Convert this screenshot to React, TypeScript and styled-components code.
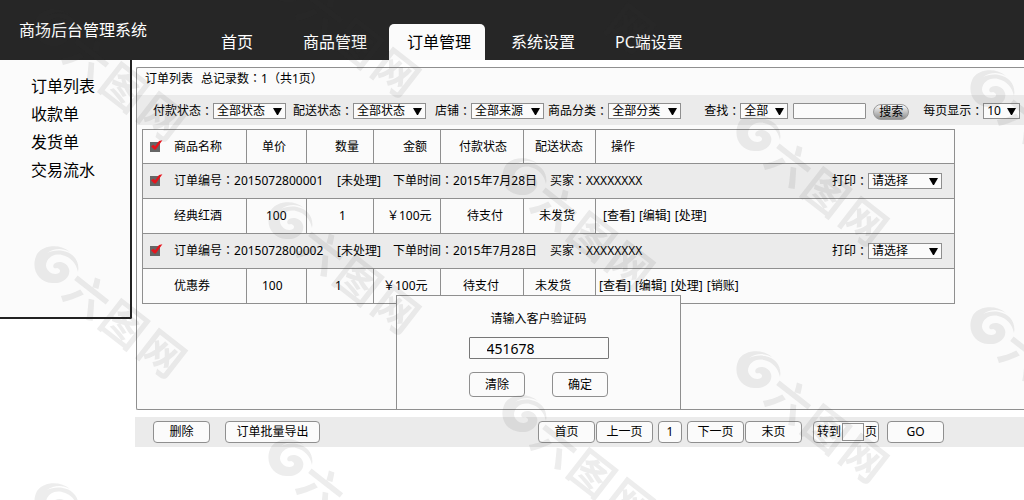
import React from 'react';
import styled, { createGlobalStyle } from 'styled-components';

const line = '#8f8f8f';
const paper = '#fbfbfb';
const band = '#ebebeb';
const dark = '#262626';

const GlobalStyle = createGlobalStyle`
  *, *::before, *::after { box-sizing: border-box; }
  body {
    margin: 0;
    background: #fff;
    color: #000;
    font-family: "Noto Sans", "Noto Sans CJK SC", sans-serif;
    font-size: 12px;
    line-height: 16px;
  }
  button, input, select { font: inherit; color: inherit; margin: 0; }
  a { color: inherit; text-decoration: none; }
`;

/* Full-width punctuation that sits in the middle of its cell. */
const Mark = styled.span`
  font-family: "Noto Sans CJK TC", sans-serif;
  line-height: 1;
`;

/* ---------- header ---------- */

const Header = styled.header`
  display: flex;
  height: 60px;
  background: ${dark};
  color: #fff;
  font-size: 16px;
`;

const SystemName = styled.h1`
  width: 203px;
  margin: 0;
  padding: 18px 0 0 19px;
  font-size: 16px;
  font-weight: 400;
  line-height: 24px;
  white-space: nowrap;
`;

const Nav = styled.nav`
  display: flex;
  align-items: flex-end;
  gap: 8px;
`;

const Tab = styled.a<{ $active?: boolean }>`
  min-width: 74px;
  height: 36px;
  padding: 0 14px 0 18px;
  border-radius: 5px 5px 0 0;
  background: ${(p) => (p.$active ? paper : 'transparent')};
  color: ${(p) => (p.$active ? '#000' : '#fff')};
  line-height: 36px;
  white-space: nowrap;
`;

/* ---------- body ---------- */

const Body = styled.div`
  display: flex;
  align-items: flex-start;
`;

const Sidebar = styled.aside`
  flex: none;
  width: 132px;
  min-height: 259px;
  padding: 12px 0 0 31px;
  border: solid #222;
  border-width: 0 2px 2px 0;
  border-radius: 0 0 2px 0;
  background: ${paper};
`;

const SideLink = styled.a`
  display: block;
  font-size: 16px;
  line-height: 28px;
`;

const Main = styled.main`
  flex: 1;
  min-width: 0;
  padding: 7px 0 0 3px;
`;

const Panel = styled.section`
  position: relative;
  min-height: 343px;
  margin-left: 1px;
  border: solid ${line};
  border-width: 1px 0 1px 1px;
  border-radius: 2px 0 0 2px;
  background: ${paper};
`;

const PanelTitle = styled.h2`
  display: flex;
  gap: 8px;
  margin: 0;
  padding: 0 8px;
  font-size: 12px;
  font-weight: 400;
  line-height: 22px;
  height: 27px;
`;

const Filters = styled.form`
  display: flex;
  align-items: center;
  height: 30px;
  padding: 2px 0 0 16px;
  background: ${band};
  white-space: nowrap;
`;

const Field = styled.label<{ $before?: number }>`
  display: flex;
  align-items: center;
  margin-left: ${(p) => p.$before ?? 0}px;
`;

const SelectBox = styled.span<{ $width: number }>`
  position: relative;
  display: block;
  width: ${(p) => p.$width}px;
  height: 16px;

  select {
    display: block;
    appearance: none;
    width: 100%;
    height: 16px;
    padding: 0 0 0 3px;
    border: 1px solid ${line};
    border-radius: 0;
    background: ${paper};
    line-height: 14px;
  }

  svg {
    position: absolute;
    top: 5px;
    right: 4px;
    pointer-events: none;
  }
`;

const TextBox = styled.input<{ $width: number }>`
  width: ${(p) => p.$width}px;
  height: 16px;
  padding: 0 4px;
  border: 1px solid ${line};
  border-radius: 1px;
  background: ${paper};
`;

const SearchButton = styled.button`
  width: 36px;
  height: 16px;
  margin: 2px 0 0 7px;
  padding: 0;
  border: 1px solid #999;
  border-radius: 8px;
  background: linear-gradient(#fafafa, #c4c4c4 50%, #8f8f8f);
  line-height: 14px;
`;

/* ---------- orders ---------- */

const TableWrap = styled.div`
  padding: 4px 69px 0 5px;
`;

const Table = styled.table`
  width: 100%;
  border-collapse: collapse;
  table-layout: fixed;
  border: 1px solid ${line};
`;

const Row = styled.tr<{ $group?: boolean; $head?: boolean }>`
  height: ${(p) => (p.$head ? 34 : 35)}px;
  background: ${(p) => (p.$group ? band : paper)};
`;

const HeadCell = styled.th<{ $pad: number }>`
  padding: 0 0 0 ${(p) => p.$pad}px;
  border: 1px solid ${line};
  font-weight: 400;
  text-align: left;
  white-space: nowrap;
`;

const Cell = styled.td<{ $pad: number }>`
  padding: 0 0 0 ${(p) => p.$pad}px;
  border: 1px solid ${line};
  white-space: nowrap;
`;

const OrderLine = styled.div`
  display: grid;
  grid-template-columns: 24px 163px 56px 157px 1fr auto;
  align-items: center;
  padding-right: 12px;
`;

const Inline = styled.div`
  display: flex;
  align-items: center;
`;

const Actions = styled.div`
  display: flex;
  gap: 4px;
`;

const Tick = styled.label`
  position: relative;
  display: block;
  width: 24px;
  height: 12px;

  input {
    display: block;
    appearance: none;
    width: 10px;
    height: 10px;
    margin-top: 1px;
    background: #666;
  }

  svg {
    position: absolute;
    top: -1px;
    left: 0;
    display: none;
    pointer-events: none;
  }

  input:checked + svg { display: block; }
`;

/* ---------- code dialog ---------- */

const Dialog = styled.form`
  position: absolute;
  bottom: -1px;
  left: 259px;
  display: flex;
  flex-direction: column;
  align-items: center;
  width: 285px;
  height: 115px;
  padding-top: 14px;
  border: 1px solid ${line};
  background: ${paper};

  label { line-height: 18px; }
`;

const CodeInput = styled.input`
  width: 140px;
  height: 22px;
  margin: 9px 0 13px;
  padding: 0 17px;
  border: 1px solid #777;
  border-radius: 1px;
  background: ${paper};
  font-size: 14px;
`;

const DialogButtons = styled.div`
  display: flex;
  gap: 27px;
`;

const Button = styled.button<{ $width: number; $tall?: boolean }>`
  width: ${(p) => p.$width}px;
  height: ${(p) => (p.$tall ? 25 : 22)}px;
  padding: 0;
  border: 1px solid ${line};
  border-radius: 4px;
  background: ${paper};
  white-space: nowrap;
`;

/* ---------- footer ---------- */

const Footer = styled.footer`
  display: flex;
  align-items: center;
  justify-content: space-between;
  height: 30px;
  margin-top: 7px;
  padding: 0 80px 0 18px;
  background: ${band};
`;

const ButtonGroup = styled.div<{ $gap: number }>`
  display: flex;
  gap: ${(p) => p.$gap}px;
`;

const JumpTo = styled.label`
  display: flex;
  align-items: center;
  width: 66px;
  height: 22px;
  margin: 0 3px 0 6px;
  padding-left: 3px;
  border: 1px solid ${line};
  border-radius: 4px;
  background: ${paper};
  white-space: nowrap;

  input {
    width: 22px;
    height: 18px;
    margin: 0 1px;
    padding: 0 2px;
    border: 1px solid ${line};
    background: ${paper};
  }
`;

const Watermark = styled.svg`
  position: fixed;
  inset: 0;
  width: 100%;
  height: 100%;
  pointer-events: none;
`;

const Colon = () => <Mark>：</Mark>;

const Select = ({ value, width }: { value: string; width: number }) => (
  <SelectBox $width={width}>
    <select>
      <option>{value}</option>
    </select>
    <svg width="9" height="7" viewBox="0 0 9 7" aria-hidden="true">
      <path d="M0 0H9L5 7H4Z" />
    </svg>
  </SelectBox>
);

const CheckBox = ({ label }: { label: string }) => (
  <Tick>
    <input type="checkbox" defaultChecked aria-label={label} />
    <svg width="13" height="12" viewBox="0 0 13 12" aria-hidden="true">
      <path d="M1 6.2L3.6 4.8L5 6.6L9 1L12.4 0.2L5.8 9.6H4.2Z" fill="#e8141c" />
    </svg>
  </Tick>
);

const columns = [
  { name: '商品名称', width: 104, head: 7, body: 31 },
  { name: '单价', width: 60, head: 15, body: 19 },
  { name: '数量', width: 67, head: 28, body: 32 },
  { name: '金额', width: 67, head: 29, body: 13 },
  { name: '付款状态', width: 83, head: 18, body: 26 },
  { name: '配送状态', width: 72, head: 11, body: 15 },
  { name: '操作', width: 0, head: 15, body: 7 },
];

const orders = [
  {
    id: '2015072800001',
    shift: 0,
    cells: ['经典红酒', '100', '1', '￥100元', '待支付', '未发货'],
    actions: ['[查看]', '[编辑]', '[处理]'],
  },
  {
    id: '2015072800002',
    shift: 4,
    cells: ['优惠券', '100', '1', '￥100元', '待支付', '未发货'],
    actions: ['[查看]', '[编辑]', '[处理]', '[销账]'],
  },
];

/* Diagonal lattice of marks; each one is a swirl followed by three characters. */
const marks = [0, 1, 2, 3, 4].flatMap((i) =>
  [-1, 0, 1].map((k) => ({ x: 20 + 234 * i, y: 235 - 44 * i + 237 * k })),
);

const glyphs = [
  { char: '六', x: 67, y: 61, size: 44 },
  { char: '图', x: 104, y: 90, size: 44 },
  { char: '网', x: 142, y: 119, size: 44 },
];

export default function App() {
  return (
    <>
      <GlobalStyle />
      <Header>
        <SystemName>商场后台管理系统</SystemName>
        <Nav>
          <Tab href="#home">首页</Tab>
          <Tab href="#goods">商品管理</Tab>
          <Tab href="#orders" $active>订单管理</Tab>
          <Tab href="#system">系统设置</Tab>
          <Tab href="#pc">PC端设置</Tab>
        </Nav>
      </Header>
      <Body>
        <Sidebar>
          <SideLink href="#list">订单列表</SideLink>
          <SideLink href="#receipts">收款单</SideLink>
          <SideLink href="#shipping">发货单</SideLink>
          <SideLink href="#flow">交易流水</SideLink>
        </Sidebar>
        <Main>
          <Panel>
            <PanelTitle>
              <span>订单列表</span>
              <span>总记录数<Colon />1<Mark>（</Mark>共1页<Mark>）</Mark></span>
            </PanelTitle>
            <Filters onSubmit={(e) => e.preventDefault()}>
              <Field>付款状态<Colon /><Select value="全部状态" width={73} /></Field>
              <Field $before={7}>配送状态<Colon /><Select value="全部状态" width={73} /></Field>
              <Field $before={9}>店铺<Colon /><Select value="全部来源" width={73} /></Field>
              <Field $before={4}>商品分类<Colon /><Select value="全部分类" width={73} /></Field>
              <Field $before={23}>查找<Colon /><Select value="全部" width={48} /></Field>
              <Field $before={5}><TextBox $width={73} aria-label="查找内容" /></Field>
              <SearchButton>搜索</SearchButton>
              <Field $before={14}>每页显示<Colon /><Select value="10" width={37} /></Field>
            </Filters>
            <TableWrap>
              <Table>
                <colgroup>
                  {columns.map((c) => (
                    <col key={c.name} width={c.width || undefined} />
                  ))}
                </colgroup>
                <thead>
                  <Row $head>
                    {columns.map((c, i) => (
                      <HeadCell key={c.name} $pad={c.head}>
                        {i ? c.name : <Inline><CheckBox label="全选" />{c.name}</Inline>}
                      </HeadCell>
                    ))}
                  </Row>
                </thead>
                <tbody>
                  {orders.map((o) => (
                    <React.Fragment key={o.id}>
                      <Row $group>
                        <Cell $pad={7} colSpan={7}>
                          <OrderLine>
                            <CheckBox label={o.id} />
                            <span>订单编号<Colon />{o.id}</span>
                            <span>[未处理]</span>
                            <span>下单时间<Colon />2015年7月28日</span>
                            <span>买家<Colon />XXXXXXXX</span>
                            <Field>打印<Colon /><Select value="请选择" width={74} /></Field>
                          </OrderLine>
                        </Cell>
                      </Row>
                      <Row>
                        {o.cells.map((text, i) => (
                          <Cell key={i} $pad={columns[i].body - (i ? o.shift : 0)}>{text}</Cell>
                        ))}
                        <Cell $pad={columns[6].body - o.shift}>
                          <Actions>
                            {o.actions.map((a) => <a key={a} href="#action">{a}</a>)}
                          </Actions>
                        </Cell>
                      </Row>
                    </React.Fragment>
                  ))}
                </tbody>
              </Table>
            </TableWrap>
            <Dialog onSubmit={(e) => e.preventDefault()}>
              <label htmlFor="code">请输入客户验证码</label>
              <CodeInput id="code" defaultValue="451678" />
              <DialogButtons>
                <Button type="reset" $width={56} $tall>清除</Button>
                <Button $width={56} $tall>确定</Button>
              </DialogButtons>
            </Dialog>
          </Panel>
          <Footer>
            <ButtonGroup $gap={15}>
              <Button $width={57}>删除</Button>
              <Button $width={95}>订单批量导出</Button>
            </ButtonGroup>
            <ButtonGroup $gap={5}>
              <ButtonGroup $gap={1}>
                <Button $width={57}>首页</Button>
                <Button $width={57}>上一页</Button>
              </ButtonGroup>
              <Button $width={24}>1</Button>
              <ButtonGroup $gap={1}>
                <Button $width={57}>下一页</Button>
                <Button $width={57}>末页</Button>
              </ButtonGroup>
              <JumpTo>转到<input aria-label="页码" />页</JumpTo>
              <Button $width={57}>GO</Button>
            </ButtonGroup>
          </Footer>
        </Main>
      </Body>
      <Watermark aria-hidden="true">
        {marks.map((m) => (
          <g key={`${m.x} ${m.y}`} transform={`translate(${m.x} ${m.y})`} fill="#3a3a3a" opacity="0.09">
            <path d="M50 17C41 9 24 9 17 19C10 33 18 47 32 48C44 49 51 41 49 34C47 27 38 25 34 29C32 32 34 34 37 33C40 34 41 36 39 38C34 41 27 37 26 31C26 23 34 18 42 20C51 22 56 28 58 37C60 27 54 18 43 16C37 15 31 16 27 18C34 13 43 13 50 17Z" />
            {glyphs
              .filter((g) => m.y + g.y > 0 && m.y + g.y < 510 && m.x + g.x < 1040)
              .map((g) => (
                <text
                  key={g.char}
                  transform={`translate(${g.x} ${g.y}) rotate(38)`}
                  y="16"
                  textAnchor="middle"
                  fontFamily="Noto Sans CJK SC, sans-serif"
                  fontSize={g.size}
                  fontWeight="700"
                >
                  {g.char}
                </text>
              ))}
          </g>
        ))}
      </Watermark>
    </>
  );
}
